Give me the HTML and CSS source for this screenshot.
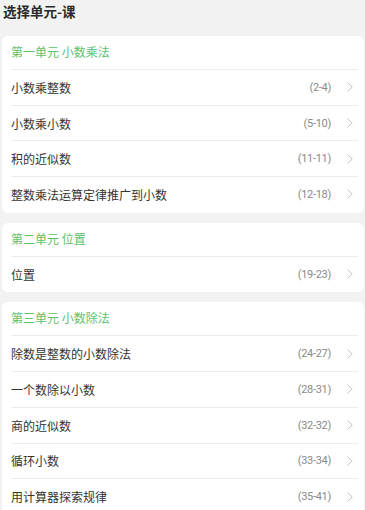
FILE: index.html
```html
<!DOCTYPE html>
<html lang="zh-CN">
<head>
<meta charset="utf-8">
<link rel="stylesheet" href="styles.css">
</head>
<body>
<div class="page">
  <h1 class="title">选择单元-课</h1>

  <section class="card">
    <div class="unit">第一单元 小数乘法</div>
    <div class="row"><span class="name">小数乘整数</span><span class="range">(2-4)</span><svg class="chev" viewBox="0 0 6 10"><path d="M0.5 0.5 L5.2 5 L0.5 9.5"/></svg></div>
    <div class="row"><span class="name">小数乘小数</span><span class="range">(5-10)</span><svg class="chev" viewBox="0 0 6 10"><path d="M0.5 0.5 L5.2 5 L0.5 9.5"/></svg></div>
    <div class="row"><span class="name">积的近似数</span><span class="range">(11-11)</span><svg class="chev" viewBox="0 0 6 10"><path d="M0.5 0.5 L5.2 5 L0.5 9.5"/></svg></div>
    <div class="row"><span class="name">整数乘法运算定律推广到小数</span><span class="range">(12-18)</span><svg class="chev" viewBox="0 0 6 10"><path d="M0.5 0.5 L5.2 5 L0.5 9.5"/></svg></div>
  </section>

  <section class="card">
    <div class="unit">第二单元 位置</div>
    <div class="row"><span class="name">位置</span><span class="range">(19-23)</span><svg class="chev" viewBox="0 0 6 10"><path d="M0.5 0.5 L5.2 5 L0.5 9.5"/></svg></div>
  </section>

  <section class="card">
    <div class="unit">第三单元 小数除法</div>
    <div class="row"><span class="name">除数是整数的小数除法</span><span class="range">(24-27)</span><svg class="chev" viewBox="0 0 6 10"><path d="M0.5 0.5 L5.2 5 L0.5 9.5"/></svg></div>
    <div class="row"><span class="name">一个数除以小数</span><span class="range">(28-31)</span><svg class="chev" viewBox="0 0 6 10"><path d="M0.5 0.5 L5.2 5 L0.5 9.5"/></svg></div>
    <div class="row"><span class="name">商的近似数</span><span class="range">(32-32)</span><svg class="chev" viewBox="0 0 6 10"><path d="M0.5 0.5 L5.2 5 L0.5 9.5"/></svg></div>
    <div class="row"><span class="name">循环小数</span><span class="range">(33-34)</span><svg class="chev" viewBox="0 0 6 10"><path d="M0.5 0.5 L5.2 5 L0.5 9.5"/></svg></div>
    <div class="row"><span class="name">用计算器探索规律</span><span class="range">(35-41)</span><svg class="chev" viewBox="0 0 6 10"><path d="M0.5 0.5 L5.2 5 L0.5 9.5"/></svg></div>
  </section>
</div>
</body>
</html>
```
FILE: styles.css
```css
html, body {
  margin: 0;
  padding: 0;
  background: #f2f2f2;
  font-family: "Noto Sans CJK SC", "Noto Sans", sans-serif;
  overflow: hidden;
}

.page {
  padding: 0 1px 0 2px;
  display: flex;
  flex-direction: column;
  gap: 10px;
}

.title {
  margin: 0;
  height: 26px;
  line-height: 22px;
  padding-left: 1px;
  font-size: 13.5px;
  font-weight: 700;
  color: #2a2a2a;
}

.card {
  background: #ffffff;
  border-radius: 6px;
  padding: 0 6px 0 9px;
  display: flex;
  flex-direction: column;
}

.unit {
  height: 33px;
  line-height: 32px;
  font-size: 12px;
  color: #5cc26a;
  border-bottom: 1px solid #ececec;
}

.row {
  height: 34.7px;
  display: flex;
  align-items: center;
  border-bottom: 1px solid #ececec;
}

.row:last-child {
  border-bottom-color: transparent;
}

.name {
  flex: 1;
  font-size: 12px;
  color: #333333;
}

.range {
  font-family: "Roboto", "Noto Sans", sans-serif;
  font-size: 11px;
  color: #8a8a8a;
  letter-spacing: -0.3px;
}

.chev {
  width: 6px;
  height: 10px;
  margin: 0 5px 0 16px;
  fill: none;
  stroke: #c2c2c2;
  stroke-width: 1;
}
```
